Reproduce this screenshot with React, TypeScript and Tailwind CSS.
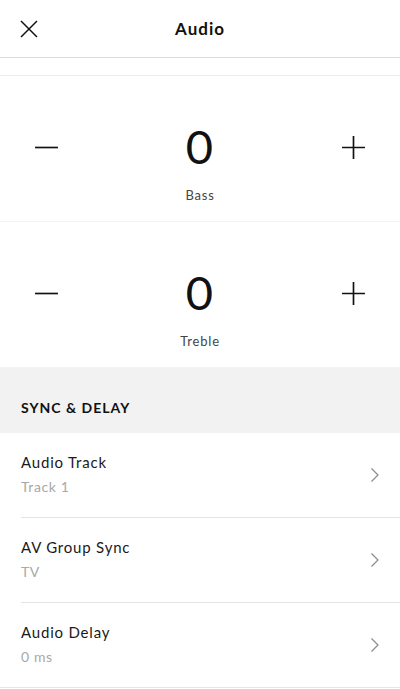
import React from "react";

const font = { fontFamily: "Lato, 'Open Sans', sans-serif" };

function Stepper({ value, label }: { value: number; label: string }) {
  return (
    <div className="border-b border-[#f3f3f3] pt-[47px] pb-[18px]">
      <div className="flex h-[48px] items-center justify-between px-[33px]">
        <button aria-label="decrease" className="flex h-[26px] w-[26px] items-center justify-center">
          <svg width="25" height="25" viewBox="0 0 24 24" fill="none" stroke="#111" strokeWidth={1.6}>
            <path d="M1 12h22" />
          </svg>
        </button>
        <span className="-mt-[2px] text-[47px] leading-none font-normal tracking-[1px] text-[#111]">{value}</span>
        <button aria-label="increase" className="flex h-[26px] w-[26px] items-center justify-center">
          <svg width="25" height="25" viewBox="0 0 24 24" fill="none" stroke="#111" strokeWidth={1.6}>
            <path d="M1 12h22M12 1v22" />
          </svg>
        </button>
      </div>
      <div className="mt-[16px] text-center text-[13px] leading-[16px] tracking-[0.8px] text-[#444]">{label}</div>
    </div>
  );
}

function Row({ title, value, last }: { title: string; value: string; last?: boolean }) {
  return (
    <div className={last ? "border-b border-[#e6e6e6]" : ""}>
      <div className="flex items-center pl-[21px]">
        <div className={`flex flex-1 items-center pr-[20px] pt-[19px] pb-[20px] ${last ? "" : "border-b border-[#e4e4e4]"}`}>
          <div className="flex-1">
            <div className="text-[15px] leading-[20px] tracking-[0.8px] text-[#1a1a1a]">{title}</div>
            <div className="mt-[5px] text-[14px] leading-[20px] tracking-[0.6px] text-[#a8a8a8]">{value}</div>
          </div>
          <svg width="10" height="16" viewBox="0 0 10 16" fill="none" stroke="#8a8a8a" strokeWidth={1.2}>
            <path d="M1.5 1.5l6.5 6.5-6.5 6.5" />
          </svg>
        </div>
      </div>
    </div>
  );
}

export default function App() {
  return (
    <div className="min-h-[689px] w-full bg-white" style={font}>
      {/* header */}
      <div className="relative flex h-[58px] items-center justify-center border-b border-[#dcdcdc]">
        <button aria-label="close" className="absolute left-[20px] top-[20px]">
          <svg width="18" height="18" viewBox="0 0 18 18" fill="none" stroke="#111" strokeWidth={1.5}>
            <path d="M1 1l16 16M17 1L1 17" />
          </svg>
        </button>
        <h1 className="text-[17px] font-bold tracking-[1px] text-[#111]">Audio</h1>
      </div>
      <div className="h-[18px] border-b border-[#ececec]" />

      <Stepper value={0} label="Bass" />
      <Stepper value={0} label="Treble" />

      <div className="bg-[#f2f2f2] px-[21px] pt-[31px] pb-[16px]">
        <div className="text-[14px] font-bold leading-[18px] tracking-[1px] text-[#111]">SYNC &amp; DELAY</div>
      </div>

      <Row title="Audio Track" value="Track 1" />
      <Row title="AV Group Sync" value="TV" />
      <Row title="Audio Delay" value="0 ms" last />
    </div>
  );
}
